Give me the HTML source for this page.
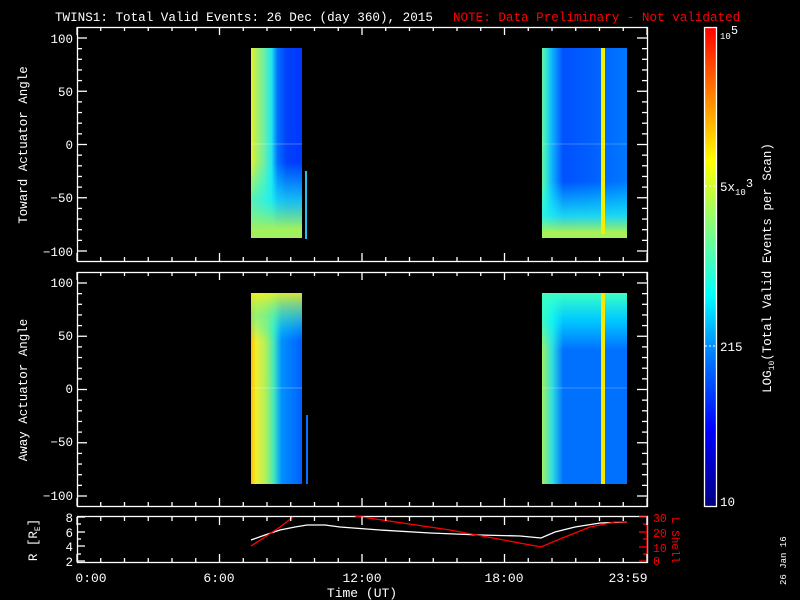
<!DOCTYPE html>
<html><head><meta charset="utf-8"><style>
html,body{margin:0;padding:0;background:#000;width:800px;height:600px;overflow:hidden}
svg{display:block}
text{font-family:"Liberation Mono",monospace;fill:#fff}
</style></head><body>
<svg id="s" width="800" height="600" viewBox="0 0 800 600" xmlns="http://www.w3.org/2000/svg">
<defs>
<linearGradient id="cb" x1="0" y1="1" x2="0" y2="0">
<stop offset="0" stop-color="#000080"/><stop offset="0.16" stop-color="#0000ff"/><stop offset="0.32" stop-color="#0080ff"/><stop offset="0.44" stop-color="#00ffff"/><stop offset="0.58" stop-color="#80ff80"/><stop offset="0.72" stop-color="#ffff00"/><stop offset="0.86" stop-color="#ff8000"/><stop offset="1" stop-color="#ff0000"/>
</linearGradient>
<linearGradient id="a1" x1="0" x2="1" y1="0" y2="0">
<stop offset="0" stop-color="#f0f020"/><stop offset="0.08" stop-color="#b8f058"/><stop offset="0.25" stop-color="#70f0a0"/><stop offset="0.4" stop-color="#20e8f0"/><stop offset="0.52" stop-color="#0070ff"/><stop offset="0.7" stop-color="#0040fa"/><stop offset="1" stop-color="#0038ff"/>
</linearGradient>
<linearGradient id="a1b" x1="0" x2="0" y1="0" y2="1">
<stop offset="0.6" stop-color="#00ffff" stop-opacity="0"/><stop offset="0.8" stop-color="#20f0f0" stop-opacity="0.7"/><stop offset="0.95" stop-color="#a0f060" stop-opacity="1"/>
</linearGradient>
<linearGradient id="a2" x1="0" x2="1" y1="0" y2="0">
<stop offset="0" stop-color="#70f0a0"/><stop offset="0.05" stop-color="#30e8d0"/><stop offset="0.12" stop-color="#10b0ff"/><stop offset="0.25" stop-color="#0050ff"/><stop offset="0.6" stop-color="#0060ff"/><stop offset="1" stop-color="#0078ff"/>
</linearGradient>
<linearGradient id="a2b" x1="0" x2="0" y1="0" y2="1">
<stop offset="0.7" stop-color="#00ffff" stop-opacity="0"/><stop offset="0.88" stop-color="#20f0f0" stop-opacity="0.8"/><stop offset="0.97" stop-color="#a8f058" stop-opacity="1"/>
</linearGradient>
<linearGradient id="b1" x1="0" x2="1" y1="0" y2="0">
<stop offset="0" stop-color="#ffc000"/><stop offset="0.1" stop-color="#f0f030"/><stop offset="0.3" stop-color="#a8f060"/><stop offset="0.45" stop-color="#40e8c0"/><stop offset="0.6" stop-color="#0090ff"/><stop offset="1" stop-color="#0060ff"/>
</linearGradient>
<linearGradient id="b1b" x1="0" x2="0" y1="0" y2="1">
<stop offset="0" stop-color="#f0f020" stop-opacity="0.9"/><stop offset="0.12" stop-color="#60f0a0" stop-opacity="0.6"/><stop offset="0.25" stop-color="#00ffff" stop-opacity="0"/>
</linearGradient>
<linearGradient id="b2" x1="0" x2="1" y1="0" y2="0">
<stop offset="0" stop-color="#a0f060"/><stop offset="0.12" stop-color="#30e0e0"/><stop offset="0.25" stop-color="#0070ff"/><stop offset="1" stop-color="#0070ff"/>
</linearGradient>
<linearGradient id="b2b" x1="0" x2="0" y1="0" y2="1">
<stop offset="0" stop-color="#40ffc0" stop-opacity="1"/><stop offset="0.15" stop-color="#00ffff" stop-opacity="0.6"/><stop offset="0.3" stop-color="#00ffff" stop-opacity="0"/>
</linearGradient>
</defs>

<text x="55" y="21" font-size="12.6">TWINS1: Total Valid Events: 26 Dec (day 360), 2015</text>
<text x="453" y="21" font-size="12.6" style="fill:#ff0000">NOTE: Data Preliminary - Not validated</text>

<rect x="251" y="48" width="51" height="190" fill="url(#a1)"/>
<rect x="251" y="48" width="51" height="190" fill="url(#a1b)"/>
<rect x="305" y="171" width="2" height="68" fill="#20c0f0"/>
<rect x="542" y="48" width="85" height="190" fill="url(#a2)"/>
<rect x="542" y="48" width="85" height="190" fill="url(#a2b)"/>
<rect x="601" y="48" width="4" height="186" fill="#f0f000"/>
<rect x="251" y="143" width="51" height="2" fill="#ffffff" opacity="0.15"/>
<rect x="542" y="143" width="85" height="2" fill="#ffffff" opacity="0.12"/>

<rect x="251" y="293" width="51" height="191" fill="url(#b1)"/>
<rect x="251" y="293" width="51" height="191" fill="url(#b1b)"/>
<rect x="306" y="415" width="2" height="69" fill="#0070ff"/>
<rect x="542" y="293" width="85" height="191" fill="url(#b2)"/>
<rect x="542" y="293" width="85" height="191" fill="url(#b2b)"/>
<rect x="601" y="293" width="4" height="191" fill="#f8e800"/>
<rect x="251" y="387" width="51" height="2" fill="#ffffff" opacity="0.15"/>
<rect x="542" y="387" width="85" height="2" fill="#ffffff" opacity="0.12"/>

<g stroke="#fff" stroke-width="1.3" fill="none">
<rect x="77.5" y="27.5" width="570" height="234"/>
<rect x="77.5" y="272.5" width="570" height="234"/>
<rect x="77.5" y="516.5" width="570" height="46"/>
</g>

<polyline fill="none" stroke="#fff" stroke-width="1.3" points="251,540 265,535 280,530 295,527 307,525 325,525 340,527 380,530 430,533 480,535 520,536 541,538 555,532 575,527 600,523 627,522"/>
<polyline fill="none" stroke="#f00" stroke-width="1.3" points="251,546 265,537 280,527 293,517"/>
<polyline fill="none" stroke="#f00" stroke-width="1.3" points="355,516 450,530 541,547 560,539 590,527 615,522 627,522"/>
<g stroke="#f00" stroke-width="1.3"><line x1="647" y1="517" x2="647" y2="562"/>
<line x1="647" y1="517" x2="639" y2="517"/><line x1="647" y1="532" x2="639" y2="532"/><line x1="647" y1="547" x2="639" y2="547"/><line x1="647" y1="561" x2="639" y2="561"/>
<line x1="647" y1="524" x2="643" y2="524"/><line x1="647" y1="539" x2="643" y2="539"/><line x1="647" y1="554" x2="643" y2="554"/></g>
<g font-size="11.5"><text x="653" y="522" style="fill:#f00">30</text><text x="653" y="537" style="fill:#f00">20</text><text x="653" y="552" style="fill:#f00">10</text><text x="653" y="565" style="fill:#f00">0</text></g>
<text transform="translate(672,517) rotate(90)" font-size="11" style="fill:#f00">L Shell</text>

<g font-size="12.5" text-anchor="end">
<text x="73" y="43">100</text><text x="73" y="96">50</text><text x="73" y="149">0</text><text x="73" y="202">−50</text><text x="73" y="256">−100</text>
<text x="73" y="287">100</text><text x="73" y="340">50</text><text x="73" y="393">0</text><text x="73" y="446">−50</text><text x="73" y="500">−100</text>
<text x="73" y="522">8</text><text x="73" y="537">6</text><text x="73" y="551">4</text><text x="73" y="566">2</text>
</g>
<text transform="translate(27,145) rotate(-90)" font-size="12.5" text-anchor="middle">Toward Actuator Angle</text>
<text transform="translate(27,390) rotate(-90)" font-size="12.5" text-anchor="middle">Away Actuator Angle</text>
<text transform="translate(37,540) rotate(-90)" font-size="12.5" text-anchor="middle">R [R<tspan font-size="8" dy="3">E</tspan><tspan dy="-3">]</tspan></text>

<g font-size="13" text-anchor="middle">
<text x="91" y="582">0:00</text><text x="219" y="582">6:00</text><text x="362" y="582">12:00</text><text x="504" y="582">18:00</text><text x="628" y="582">23:59</text>
<text x="362" y="597">Time (UT)</text>
</g>

<rect x="704.5" y="27.5" width="12" height="479" fill="url(#cb)" stroke="#fff" stroke-width="1.3"/>
<g stroke="#fff" stroke-dasharray="2,2"><line x1="705" y1="186" x2="716" y2="186"/><line x1="705" y1="346" x2="716" y2="346"/></g>
<text x="720" y="39" font-size="9">10<tspan font-size="12" dy="-5">5</tspan></text>
<text x="720" y="191" font-size="12.5">5x<tspan font-size="9" dy="4">10</tspan><tspan font-size="12" dy="-8">3</tspan></text>
<text x="720" y="351" font-size="12.5">215</text>
<text x="720" y="506" font-size="12.5">10</text>
<text transform="translate(771,268) rotate(-90)" font-size="12.5" text-anchor="middle">LOG<tspan font-size="8" dy="3">10</tspan><tspan dy="-3">(Total Valid Events per Scan)</tspan></text>
<text transform="translate(786,585) rotate(-90)" font-size="9">26 Jan 16</text>
</svg>
<script>
var s=document.getElementById('s'),ns='http://www.w3.org/2000/svg';
function L(x1,y1,x2,y2){var l=document.createElementNS(ns,'line');l.setAttribute('x1',x1);l.setAttribute('y1',y1);l.setAttribute('x2',x2);l.setAttribute('y2',y2);l.setAttribute('stroke','#fff');l.setAttribute('stroke-width','1.3');s.appendChild(l);}
[[27,261,144.5],[272,506,389.5]].forEach(function(p){
 for(var v=-100;v<=100;v+=10){var y=p[2]-v*1.065;if(y<p[0]||y>p[1]+1)continue;var len=(v%50==0)?10:5;L(77,y,77+len,y);L(647,y,647-len,y);}
 for(var h=0;h<=24;h++){var x=77+h*23.75;var len=(h%6==0)?8:4;L(x,p[0],x,p[0]+len);L(x,p[1],x,p[1]-len);}
});
for(var h=0;h<=24;h++){var x=77+h*23.75;var len=(h%6==0)?8:4;L(x,517,x,517+len);L(x,562,x,562-len);}
[517,524,532,539,546,554,561].forEach(function(y,i){L(77,y,77+(i%2==0?8:4),y);});
</script>
</body></html>
